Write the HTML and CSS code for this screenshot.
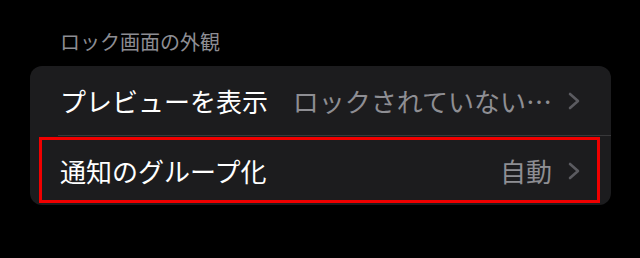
FILE: index.html
```html
<!DOCTYPE html>
<html lang="ja">
<head>
<meta charset="utf-8">
<link rel="stylesheet" href="styles.css">
</head>
<body>
<div class="page">
  <div class="section-header">ロック画面の外観</div>
  <div class="card">
    <div class="row">
      <span class="title">プレビューを表示</span>
      <span class="value">ロックされていない…</span>
      <svg class="chev" width="12" height="18" viewBox="0 0 12 18"><path d="M2 2 L10 9 L2 16" fill="none" stroke="#5b5b60" stroke-width="2.6" stroke-linecap="round" stroke-linejoin="round"/></svg>
    </div>
    <div class="sep"></div>
    <div class="row highlight">
      <span class="title">通知のグループ化</span>
      <span class="value">自動</span>
      <svg class="chev" width="12" height="18" viewBox="0 0 12 18"><path d="M2 2 L10 9 L2 16" fill="none" stroke="#5b5b60" stroke-width="2.6" stroke-linecap="round" stroke-linejoin="round"/></svg>
      <div class="mark"></div>
    </div>
  </div>
</div>
</body>
</html>
```
FILE: styles.css
```css
html, body {
  margin: 0;
  padding: 0;
  background: #000;
}
body {
  width: 640px;
  height: 258px;
  overflow: hidden;
  font-family: "Noto Sans CJK JP", "Noto Sans", sans-serif;
}
.page {
  padding-top: 30px;
}
.section-header {
  padding-left: 60px;
  font-size: 20px;
  line-height: 24px;
  color: #8d8d93;
  margin-bottom: 12px;
}
.card {
  margin-left: 30px;
  width: 581px;
  background: #1c1c1e;
  border-radius: 12px;
}
.row {
  position: relative;
  height: 69px;
  display: flex;
  align-items: center;
  padding-left: 30px;
  padding-right: 31px;
}
.title {
  flex: 1;
  font-size: 26px;
  color: #fff;
  white-space: nowrap;
}
.value {
  font-size: 26px;
  color: #8e8e93;
  margin-right: 16px;
  white-space: nowrap;
}
.chev {
  display: block;
  flex: none;
}
.sep {
  height: 1px;
  margin-left: 28px;
  background: #38383a;
}
.mark {
  position: absolute;
  left: 9px;
  top: 1px;
  right: 11px;
  bottom: 2px;
  border: 3px solid #f00000;
}
```
